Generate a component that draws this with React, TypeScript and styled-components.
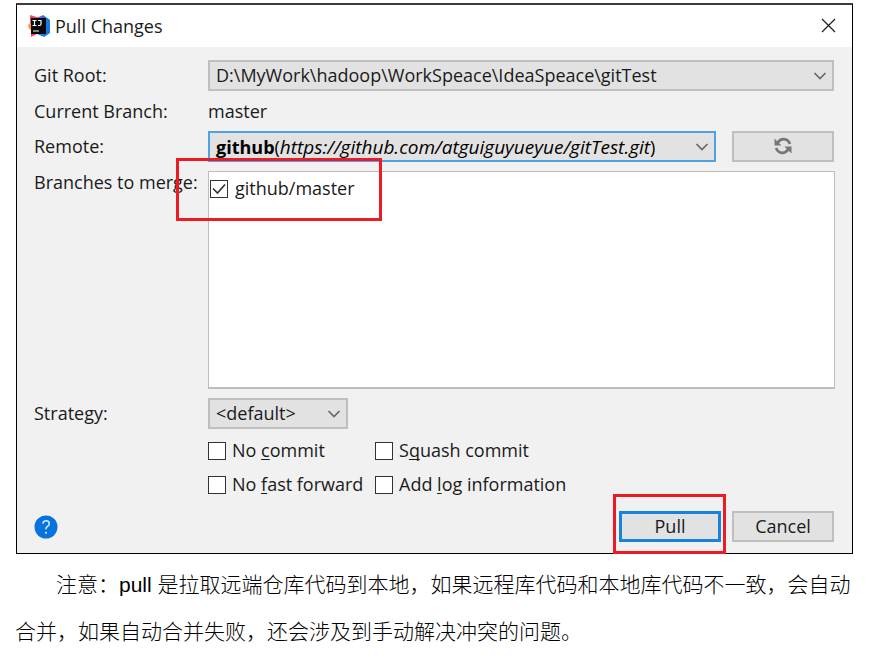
import React from "react";
import styled, { createGlobalStyle } from "styled-components";

const GlobalStyle = createGlobalStyle`
  *, *::before, *::after { box-sizing: border-box; }
  body { margin: 0; background: #fff; }
  body, button, select, input {
    font-family: "Open Sans", "Noto Sans", sans-serif;
    font-size: 18px;
    line-height: 22px;
    color: #1a1a1a;
  }
`;

const Page = styled.main`
  padding: 3px 29px 0 16px;
`;

const Dialog = styled.section`
  border: 1px solid #000;
  border-top: 2px solid #3c3c3c;
  background: #f1f1f1;
`;

const TitleBar = styled.header`
  display: flex;
  align-items: center;
  gap: 5px;
  height: 42px;
  padding: 0 16px 0 11px;
  background: #fff;
`;

const Title = styled.h1`
  flex: 1;
  margin: 0;
  font-size: 18px;
  font-weight: 400;
`;

const CloseButton = styled.button`
  display: flex;
  padding: 0 0 2px;
  border: 0;
  background: none;
`;

const Form = styled.form`
  padding: 13px 18px 11px 17px;
`;

const Fields = styled.div`
  display: grid;
  grid-template-columns: 174px 1fr;
  gap: 9px 0;
  align-items: center;
`;

const FieldLabel = styled.label`
  padding-bottom: 2px;
  white-space: nowrap;
`;

const FieldName = styled.span<{ $top?: boolean }>`
  align-self: ${(p) => (p.$top ? "start" : "center")};
  white-space: nowrap;
`;

const Line = styled.div`
  display: grid;
  grid-template-columns: 1fr 102px;
  gap: 16px;
`;

const SelectBox = styled.div<{ $narrow?: boolean }>`
  display: grid;
  grid-template-columns: 1fr 21px;
  align-items: center;
  width: ${(p) => (p.$narrow ? "140px" : "auto")};

  > * {
    grid-row: 1;
  }
  > svg {
    grid-column: 2;
    pointer-events: none;
  }
`;

const Select = styled.select<{ $active?: boolean; $hiddenText?: boolean }>`
  grid-column: 1 / -1;
  appearance: none;
  width: 100%;
  height: 31px;
  padding: 0 24px 1px 6px;
  border: 2px solid ${(p) => (p.$active ? "#4ea3e4" : "#bfbfbf")};
  border-radius: 0;
  background: #e2e2e2;
  color: ${(p) => (p.$hiddenText ? "transparent" : "#1a1a1a")};
  outline: none;
`;

const SelectValue = styled.span`
  grid-column: 1;
  padding-left: 8px;
  white-space: nowrap;
  pointer-events: none;
  color: #000;
`;

const RemoteUrl = styled.i`
  font-size: 19px;
`;

const Button = styled.button<{ $primary?: boolean }>`
  display: flex;
  align-items: center;
  justify-content: center;
  width: 102px;
  height: 31px;
  padding: 0 0 2px;
  border: ${(p) => (p.$primary ? "3px solid #1683dc" : "2px solid #bfbfbf")};
  background: #e2e2e2;
`;

const BranchList = styled.div`
  position: relative;
  align-self: stretch;
  min-height: 218px;
  margin-right: -1px;
  padding: 4px 0 0 1px;
  border: 1px solid #bdbdbd;
  border-bottom-width: 2px;
  background: #fff;
`;

const Highlight = styled.span`
  position: absolute;
  border: 3px solid #ed1c24;
  pointer-events: none;
`;

const BranchHighlight = styled(Highlight)`
  top: -14px;
  left: -33px;
  width: 206px;
  height: 63px;
`;

const PullHighlight = styled(Highlight)`
  top: -17px;
  left: -6px;
  right: -5px;
  bottom: -12px;
`;

const Check = styled.label<{ $spaced?: boolean }>`
  display: flex;
  align-items: center;
  gap: ${(p) => (p.$spaced ? "7px" : "6px")};
  height: 25px;
  white-space: nowrap;

  span {
    padding-bottom: 1px;
  }
  u {
    text-underline-offset: 2px;
    text-decoration-thickness: 1px;
    text-decoration-skip-ink: none;
  }
`;

const CheckInput = styled.input`
  appearance: none;
  width: 18px;
  height: 18px;
  margin: 0;
  border: 1px solid #333;
  background: #fff center / 16px 16px no-repeat;

  &:checked {
    background-image: url("data:image/svg+xml,%3Csvg xmlns='http://www.w3.org/2000/svg' viewBox='0 0 16 16'%3E%3Cpath d='M2 7.5l4.500 4.500 7.500-8.500' fill='none' stroke='%23333' stroke-width='1.7'/%3E%3C/svg%3E");
  }
`;

const Options = styled.div`
  grid-column: 2;
  display: grid;
  grid-template-columns: 167px 1fr;
  gap: 9px 0;
`;

const Footer = styled.footer`
  display: flex;
  align-items: center;
  gap: 11px;
  margin-top: 14px;
`;

const HelpButton = styled.button`
  display: flex;
  padding: 0;
  margin-right: auto;
  border: 0;
  background: none;
`;

const PrimarySlot = styled.div`
  position: relative;
`;

const Note = styled.p`
  margin: 7px 0 0 -1px;
  font-family: "Liberation Sans", "Noto Sans CJK SC", sans-serif;
  font-size: 21px;
  font-weight: 300;
  line-height: 47px;
  text-indent: 41px;
  color: #000;
`;

const Chevron = () => (
  <svg width="14" height="10" viewBox="0 0 14 10" aria-hidden="true">
    <path d="M1.5 2l5.500 5.500L12.500 2" fill="none" stroke="#686868" strokeWidth="1.700" />
  </svg>
);

const IdeaLogo = () => (
  <svg width="22" height="24" viewBox="0 0 22 24" aria-hidden="true">
    <path d="M2 1l10 3-1 15-8 4v-7l-2-3 1-5z" fill="#f0476b" />
    <path d="M0 11l4-3v8l-3-1z" fill="#fb9a2c" />
    <path d="M10 4l5-3 7 5v13l-6 4-7-3z" fill="#1579e6" />
    <path d="M10 3l4-1v4H9z" fill="#8a5bd0" />
    <path d="M3 4h15v16H3z" fill="#090909" />
    <path d="M4.500 6.500h4M6.500 6.500v5M4.500 11.500h4M10 6.500h3v3.500q0 1.500-1.500 1.500H10M5 17h6" fill="none" stroke="#fff" strokeWidth="1.200" />
  </svg>
);

const CloseIcon = () => (
  <svg width="15" height="15" viewBox="0 0 15 15" aria-hidden="true">
    <path d="M1 1l13 13M14 1L1 14" fill="none" stroke="#222" strokeWidth="1.3" />
  </svg>
);

const RefreshIcon = () => (
  <svg width="18" height="18" viewBox="0 0 18 18" aria-hidden="true">
    <path d="M3.500 6Q6 2 10 2.200T16 7M14.500 12Q12 16 8 15.800T2 11" fill="none" stroke="#777" strokeWidth="2.800" />
    <path d="M.500 1.500v7h7zM17.500 16.500v-7h-7z" fill="#777" />
  </svg>
);

const HelpIcon = () => (
  <svg width="24" height="24" viewBox="0 0 24 24" aria-hidden="true">
    <circle cx="12" cy="12" r="11.500" fill="#0873dc" />
    <path d="M8.900 8.600Q9.200 5.700 12.200 5.700T15.300 8.500Q15.300 10.100 13.500 11.400T12 14.400" fill="none" stroke="#d5eaff" strokeWidth="1.600" />
    <circle cx="12" cy="17.800" r="1.100" fill="#d5eaff" />
  </svg>
);

const mergeOptions = [
  { before: "No ", key: "c", after: "ommit" },
  { before: "S", key: "q", after: "uash commit" },
  { before: "No ", key: "f", after: "ast forward" },
  { before: "Add ", key: "l", after: "og information" },
];

export default function App() {
  return (
    <>
      <GlobalStyle />
      <Page>
        <Dialog role="dialog" aria-labelledby="dialog-title">
          <TitleBar>
            <IdeaLogo />
            <Title id="dialog-title">Pull Changes</Title>
            <CloseButton type="button" aria-label="Close">
              <CloseIcon />
            </CloseButton>
          </TitleBar>
          <Form onSubmit={(e) => e.preventDefault()}>
            <Fields>
              <FieldLabel htmlFor="root">Git Root:</FieldLabel>
              <SelectBox>
                <Select id="root">
                  <option>{"D:\\MyWork\\hadoop\\WorkSpeace\\IdeaSpeace\\gitTest"}</option>
                </Select>
                <Chevron />
              </SelectBox>

              <FieldName>Current Branch:</FieldName>
              <span>master</span>

              <FieldLabel htmlFor="remote">Remote:</FieldLabel>
              <Line>
                <SelectBox>
                  <Select id="remote" $active $hiddenText>
                    <option>github(https://github.com/atguiguyueyue/gitTest.git)</option>
                  </Select>
                  <SelectValue aria-hidden="true">
                    <b>github</b>(<RemoteUrl>https://github.com/atguiguyueyue/gitTest.git</RemoteUrl>)
                  </SelectValue>
                  <Chevron />
                </SelectBox>
                <Button type="button" aria-label="Refresh">
                  <RefreshIcon />
                </Button>
              </Line>

              <FieldName $top id="branches">Branches to merge:</FieldName>
              <BranchList role="group" aria-labelledby="branches">
                <Check $spaced>
                  <CheckInput type="checkbox" defaultChecked />
                  <span>github/master</span>
                </Check>
                <BranchHighlight />
              </BranchList>

              <FieldLabel htmlFor="strategy">Strategy:</FieldLabel>
              <SelectBox $narrow>
                <Select id="strategy">
                  <option>&lt;default&gt;</option>
                </Select>
                <Chevron />
              </SelectBox>

              <Options>
                {mergeOptions.map((o) => (
                  <Check key={o.key}>
                    <CheckInput type="checkbox" />
                    <span>
                      {o.before}
                      <u>{o.key}</u>
                      {o.after}
                    </span>
                  </Check>
                ))}
              </Options>
            </Fields>
            <Footer>
              <HelpButton type="button" aria-label="Help">
                <HelpIcon />
              </HelpButton>
              <PrimarySlot>
                <Button type="submit" $primary>Pull</Button>
                <PullHighlight />
              </PrimarySlot>
              <Button type="button">Cancel</Button>
            </Footer>
          </Form>
        </Dialog>
        <Note lang="zh-CN">
          注意：pull 是拉取远端仓库代码到本地，如果远程库代码和本地库代码不一致，会自动合并，如果自动合并失败，还会涉及到手动解决冲突的问题。
        </Note>
      </Page>
    </>
  );
}
